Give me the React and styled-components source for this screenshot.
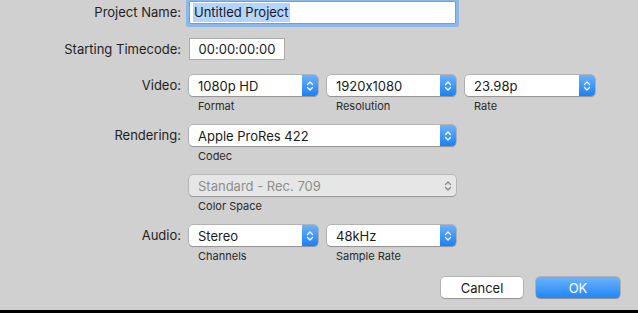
import React from "react";
import styled, { createGlobalStyle } from "styled-components";

const Global = createGlobalStyle`
  html, body { margin: 0; padding: 0; background: #000; }
  body {
    font-family: Inter, "Noto Sans", "Liberation Sans", sans-serif;
    font-feature-settings: "calt" 0;
    -webkit-font-smoothing: antialiased;
  }
`;

const Dialog = styled.div`
  height: 310px;
  box-sizing: border-box;
  background: #d0d0d0;
  padding-top: 1px;
  display: flex;
  flex-direction: column;
  color: #222;
  overflow: hidden;
`;

const Row = styled.div`
  display: flex;
  align-items: flex-start;
  margin-top: ${(p) => p.$mt || 0}px;
`;

const Label = styled.div`
  width: 181px;
  padding-right: 8px;
  text-align: right;
  font-size: 13px;
  line-height: ${(p) => p.$h || 21}px;
  height: ${(p) => p.$h || 21}px;
  color: #1f1f1f;
  white-space: nowrap;
`;

const Controls = styled.div`
  display: flex;
  gap: 9px;
`;

const Group = styled.div`
  display: flex;
  flex-direction: column;
`;

const SubLabel = styled.div`
  font-size: 11px;
  line-height: 14px;
  margin-top: 3px;
  padding-left: 9px;
  color: #2a2a2a;
`;

const TextField = styled.div`
  width: ${(p) => p.$w}px;
  height: ${(p) => p.$h}px;
  box-sizing: border-box;
  background: #fff;
  border: 1px solid ${(p) => (p.$focus ? "#6d9fdc" : "#a9a9a9")};
  box-shadow: ${(p) => (p.$focus ? "0 0 0 3px #8db8ea" : "none")};
  border-radius: ${(p) => (p.$focus ? "1px" : "0")};
  display: flex;
  align-items: center;
  justify-content: ${(p) => (p.$center ? "center" : "flex-start")};
  padding-left: ${(p) => (p.$center ? 0 : 3)}px;
  font-size: 13px;
  color: #1a1a1a;
`;

const Selected = styled.span`
  background: #b4d5fe;
  padding: 1px 1px 2px 1px;
`;

const Select = styled.div`
  width: ${(p) => p.$w}px;
  height: 21px;
  box-sizing: border-box;
  border-radius: 4px;
  background: ${(p) => (p.$disabled ? "#e6e6e6" : "#fff")};
  box-shadow: 0 0 0 0.5px rgba(0, 0, 0, ${(p) => (p.$disabled ? 0.22 : 0.28)}),
    0 1px 1px rgba(0, 0, 0, 0.18);
  display: flex;
  align-items: center;
  font-size: 13px;
  color: ${(p) => (p.$disabled ? "#8d8d8d" : "#1a1a1a")};
`;

const SelectText = styled.span`
  flex: 1;
  padding-left: 9px;
  white-space: nowrap;
`;

const Stepper = styled.div`
  width: 16px;
  height: 100%;
  border-radius: 0 4px 4px 0;
  background: ${(p) =>
    p.$disabled ? "transparent" : "linear-gradient(#6cb1fb, #1b80f6)"};
  display: flex;
  align-items: center;
  justify-content: center;
`;

const Footer = styled.div`
  display: flex;
  justify-content: flex-end;
  gap: 13px;
  padding-right: 18px;
  margin-top: 14px;
`;

const Button = styled.div`
  width: ${(p) => p.$w}px;
  height: 21px;
  border-radius: 4px;
  display: flex;
  align-items: center;
  justify-content: center;
  font-size: 13px;
  background: ${(p) => (p.$primary ? "linear-gradient(#6db3fb, #2086f7)" : "#fff")};
  color: ${(p) => (p.$primary ? "#fff" : "#1a1a1a")};
  box-shadow: 0 0 0 0.5px rgba(0, 0, 0, 0.28), 0 1px 1px rgba(0, 0, 0, 0.18);
`;

function Chevrons({ disabled }) {
  const c = disabled ? "#8a8a8a" : "#fff";
  return (
    <svg width="8" height="12" viewBox="0 0 8 12">
      <path d="M1.5 4.5 L4 2 L6.5 4.5" fill="none" stroke={c} strokeWidth="1.3" strokeLinecap="round" strokeLinejoin="round" />
      <path d="M1.5 7.5 L4 10 L6.5 7.5" fill="none" stroke={c} strokeWidth="1.3" strokeLinecap="round" strokeLinejoin="round" />
    </svg>
  );
}

function Popup({ w, value, disabled }) {
  return (
    <Select $w={w} $disabled={disabled}>
      <SelectText>{value}</SelectText>
      <Stepper $disabled={disabled}>
        <Chevrons disabled={disabled} />
      </Stepper>
    </Select>
  );
}

function Field({ w, value, sub, disabled }) {
  return (
    <Group>
      <Popup w={w} value={value} disabled={disabled} />
      <SubLabel>{sub}</SubLabel>
    </Group>
  );
}

export default function App() {
  return (
    <>
      <Global />
      <Dialog>
        <Row>
          <Label $h={23}>Project Name:</Label>
          <TextField $w={267} $h={23} $focus>
            <Selected>Untitled Project</Selected>
          </TextField>
        </Row>
        <Row $mt={14}>
          <Label $h={22}>Starting Timecode:</Label>
          <TextField $w={96} $h={22} $center>
            00:00:00:00
          </TextField>
        </Row>
        <Row $mt={15}>
          <Label>Video:</Label>
          <Controls>
            <Field w={129} value="1080p HD" sub="Format" />
            <Field w={129} value="1920x1080" sub="Resolution" />
            <Field w={130} value="23.98p" sub="Rate" />
          </Controls>
        </Row>
        <Row $mt={12}>
          <Label>Rendering:</Label>
          <Field w={267} value="Apple ProRes 422" sub="Codec" />
        </Row>
        <Row $mt={12}>
          <Label />
          <Field w={267} value="Standard - Rec. 709" sub="Color Space" disabled />
        </Row>
        <Row $mt={12}>
          <Label>Audio:</Label>
          <Controls>
            <Field w={129} value="Stereo" sub="Channels" />
            <Field w={129} value="48kHz" sub="Sample Rate" />
          </Controls>
        </Row>
        <Footer>
          <Button $w={82}>Cancel</Button>
          <Button $w={84} $primary>OK</Button>
        </Footer>
      </Dialog>
    </>
  );
}
